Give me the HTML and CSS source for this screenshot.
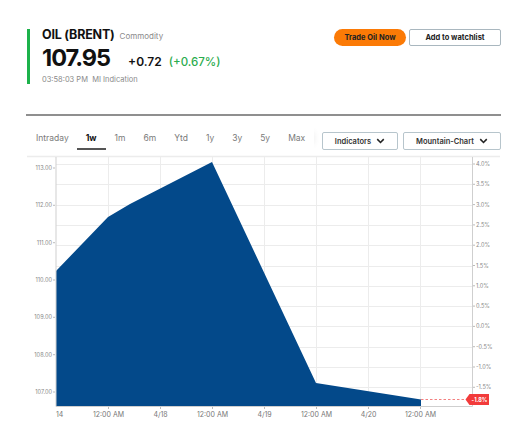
FILE: index.html
```html
<!DOCTYPE html>
<html>
<head>
<meta charset="utf-8">
<link rel="stylesheet" href="styles.css">
</head>
<body>
<div class="page">
  <header class="quote-head">
    <div class="quote-left">
      <div class="title-row"><span class="name">OIL (BRENT)</span><span class="type">Commodity</span></div>
      <div class="price-row"><span class="price">107.95</span><span class="chg">+0.72</span><span class="pct">(+0.67%)</span></div>
      <div class="meta">03:58:03 PM&nbsp;&nbsp;MI Indication</div>
    </div>
    <div class="actions">
      <button class="btn btn-trade">Trade Oil Now</button>
      <button class="btn btn-watch">Add to watchlist</button>
    </div>
  </header>
  <div class="divider"></div>
  <div class="toolbar">
    <nav class="tabs">
      <span class="tab">Intraday</span>
      <span class="tab active">1w</span>
      <span class="tab">1m</span>
      <span class="tab">6m</span>
      <span class="tab">Ytd</span>
      <span class="tab">1y</span>
      <span class="tab">3y</span>
      <span class="tab">5y</span>
      <span class="tab">Max</span>
    </nav>
    <div class="selects">
      <button class="select sel-ind">Indicators <svg class="chev" viewBox="0 0 10 7"><path d="M1.2 1.3 L5 5.2 L8.8 1.3" /></svg></button>
      <button class="select sel-mc">Mountain-Chart <svg class="chev" viewBox="0 0 10 7"><path d="M1.2 1.3 L5 5.2 L8.8 1.3" /></svg></button>
    </div>
  </div>
  <svg class="chart" viewBox="20 150 505 276" width="505" height="276">
    <line x1="27" y1="155.5" x2="500" y2="155.5" stroke="#ececec" stroke-width="1.5"/>
    <g stroke="#ececec" stroke-width="1">
      <line x1="56" y1="163.5" x2="472" y2="163.5"/>
      <line x1="56" y1="183.5" x2="472" y2="183.5"/>
      <line x1="56" y1="204.5" x2="472" y2="204.5"/>
      <line x1="56" y1="224.5" x2="472" y2="224.5"/>
      <line x1="56" y1="244.5" x2="472" y2="244.5"/>
      <line x1="56" y1="265.5" x2="472" y2="265.5"/>
      <line x1="56" y1="285.5" x2="472" y2="285.5"/>
      <line x1="56" y1="305.5" x2="472" y2="305.5"/>
      <line x1="56" y1="325.5" x2="472" y2="325.5"/>
      <line x1="56" y1="346.5" x2="472" y2="346.5"/>
      <line x1="56" y1="366.5" x2="472" y2="366.5"/>
      <line x1="56" y1="386.5" x2="472" y2="386.5"/>
      <line x1="108.5" y1="156" x2="108.5" y2="405"/>
      <line x1="160.5" y1="156" x2="160.5" y2="405"/>
      <line x1="212.5" y1="156" x2="212.5" y2="405"/>
      <line x1="264.5" y1="156" x2="264.5" y2="405"/>
      <line x1="316.5" y1="156" x2="316.5" y2="405"/>
      <line x1="368.5" y1="156" x2="368.5" y2="405"/>
      <line x1="420.5" y1="156" x2="420.5" y2="405"/>
    </g>
    <polygon points="56,270 108,216 130,203 212,161 316,382 421,398.5 421,405 56,405" fill="#03498a"/>
    <g stroke="#cfcfcf" stroke-width="1">
      <line x1="56" y1="156" x2="56" y2="405.5"/>
      <line x1="472.5" y1="156" x2="472.5" y2="405.5"/>
      <line x1="56" y1="405.5" x2="472.5" y2="405.5"/>
    </g>
    <g stroke="#aaa" stroke-width="0.8">
      <line x1="53" y1="167" x2="55" y2="167"/>
      <line x1="53" y1="204.3" x2="55" y2="204.3"/>
      <line x1="53" y1="241.7" x2="55" y2="241.7"/>
      <line x1="53" y1="279" x2="55" y2="279"/>
      <line x1="53" y1="316.3" x2="55" y2="316.3"/>
      <line x1="53" y1="353.7" x2="55" y2="353.7"/>
      <line x1="53" y1="391" x2="55" y2="391"/>
      <line x1="473" y1="163" x2="475" y2="163"/>
      <line x1="473" y1="183.3" x2="475" y2="183.3"/>
      <line x1="473" y1="203.6" x2="475" y2="203.6"/>
      <line x1="473" y1="223.9" x2="475" y2="223.9"/>
      <line x1="473" y1="244.2" x2="475" y2="244.2"/>
      <line x1="473" y1="264.5" x2="475" y2="264.5"/>
      <line x1="473" y1="284.8" x2="475" y2="284.8"/>
      <line x1="473" y1="305.1" x2="475" y2="305.1"/>
      <line x1="473" y1="325.4" x2="475" y2="325.4"/>
      <line x1="473" y1="345.7" x2="475" y2="345.7"/>
      <line x1="473" y1="366" x2="475" y2="366"/>
      <line x1="473" y1="386.3" x2="475" y2="386.3"/>
      <line x1="108.5" y1="406" x2="108.5" y2="408"/>
      <line x1="160.5" y1="406" x2="160.5" y2="408"/>
      <line x1="212.5" y1="406" x2="212.5" y2="408"/>
      <line x1="264.5" y1="406" x2="264.5" y2="408"/>
      <line x1="316.5" y1="406" x2="316.5" y2="408"/>
      <line x1="368.5" y1="406" x2="368.5" y2="408"/>
      <line x1="420.5" y1="406" x2="420.5" y2="408"/>
    </g>
    <g class="ylab" text-anchor="end">
      <text x="52" y="169">113.00</text>
      <text x="52" y="206.3">112.00</text>
      <text x="52" y="243.7">111.00</text>
      <text x="52" y="281">110.00</text>
      <text x="52" y="318.3">109.00</text>
      <text x="52" y="355.7">108.00</text>
      <text x="52" y="393">107.00</text>
    </g>
    <g class="ylab">
      <text x="476" y="165">4.0%</text>
      <text x="476" y="185.3">3.5%</text>
      <text x="476" y="205.6">3.0%</text>
      <text x="476" y="225.9">2.5%</text>
      <text x="476" y="246.2">2.0%</text>
      <text x="476" y="266.5">1.5%</text>
      <text x="476" y="286.8">1.0%</text>
      <text x="476" y="307.1">0.5%</text>
      <text x="476" y="327.4">0.0%</text>
      <text x="476" y="347.7">-0.5%</text>
      <text x="476" y="368">-1.0%</text>
      <text x="476" y="388.3">-1.5%</text>
    </g>
    <line x1="421" y1="398.5" x2="467" y2="398.5" stroke="#f06060" stroke-width="0.8" stroke-dasharray="2.5,2"/>
    <polygon points="465.5,398.5 469.5,393 489,393 489,404 469.5,404" fill="#f23b3b"/>
    <text class="badge" x="479.5" y="400.6" text-anchor="middle">-1.8%</text>
    <g class="xlab" text-anchor="middle">
      <text x="56" y="415.5" text-anchor="start">14</text>
      <text x="108.5" y="415.5">12:00 AM</text>
      <text x="160.5" y="415.5">4/18</text>
      <text x="212.5" y="415.5">12:00 AM</text>
      <text x="264.5" y="415.5">4/19</text>
      <text x="316.5" y="415.5">12:00 AM</text>
      <text x="368.5" y="415.5">4/20</text>
      <text x="420.5" y="415.5">12:00 AM</text>
    </g>
  </svg>
</div>
</body>
</html>
```
FILE: styles.css
```css
* { box-sizing: border-box; }
html, body { margin: 0; padding: 0; background: #fff; }
body { font-family: "Inter", "Lato", "Liberation Sans", sans-serif; color: #111; }
.page { width: 525px; height: 436px; padding: 29px 24px 0 27px; overflow: hidden; }
.quote-head { display: flex; justify-content: space-between; align-items: flex-start; }
.quote-left { border-left: 3px solid #1db24b; padding-left: 12px; height: 55px; }
.title-row { display: flex; align-items: baseline; gap: 5px; height: 12px; margin-top: 0; }
.name { font-size: 12.5px; font-weight: 700; line-height: 12px; color: #111; letter-spacing: -0.2px; }
.type { font-size: 8px; line-height: 12px; color: #8a8a8a; }
.price-row { display: flex; align-items: baseline; margin-top: 6px; height: 22px; }
.price { font-size: 23.5px; font-weight: 700; letter-spacing: -1px; line-height: 22px; color: #111; }
.chg { font-size: 12px; font-weight: 600; margin-left: 18px; color: #111; }
.pct { font-size: 11.5px; font-weight: 500; margin-left: 7px; color: #2bac4e; }
.meta { font-size: 7.5px; color: #8a8a8a; margin-top: 6px; }
.actions { display: flex; gap: 3px; margin-top: 0; }
.btn { font-family: inherit; font-size: 7.5px; font-weight: 700; height: 17px; padding: 0; color: #222; cursor: pointer; }
.btn-trade { width: 72px; background: #fb7a06; border: none; border-radius: 9px; }
.btn-watch { width: 92px; background: #fff; border: 1px solid #a9b7bf; border-radius: 2px; }
.divider { height: 2px; background: #8f8f8f; margin: 30px 0 0 -1px; width: 475px; }
.toolbar { display: flex; justify-content: space-between; align-items: flex-start; margin-top: 10px; height: 25px; }
.tabs { display: flex; height: 24px; box-shadow: 6px 0 6px -6px rgba(0,0,0,0.08); }
.tab { font-size: 8.5px; color: #7a7a7a; padding: 6px 9px 0; height: 24px; line-height: 12px; }
.tab:first-child { padding-right: 8px; }
.tab.active { color: #111; font-weight: 700; border-bottom: 2px solid #555; }
.selects { display: flex; gap: 5px; margin-top: 6px; }
.select { font-family: inherit; font-size: 7.5px; font-weight: 600; color: #333; background: #fff; border: 1px solid #b7c5cc; border-radius: 2px; height: 18px; display: flex; align-items: center; justify-content: center; gap: 5px; padding: 0; }
.sel-ind { width: 76px; }
.sel-mc { width: 98px; }
.chev { width: 9px; height: 6px; fill: none; stroke: #222; stroke-width: 1.8; }
.chart { display: block; margin-left: -7px; margin-top: 0; }
.ylab text, .ylab { font-size: 5.6px; fill: #888; font-family: "Inter", "Liberation Sans", sans-serif; }
.xlab text, .xlab { font-size: 7px; fill: #777; font-family: "Inter", "Liberation Sans", sans-serif; }
.badge { font-size: 5.5px; font-weight: 700; fill: #fff; font-family: "Inter", "Liberation Sans", sans-serif; }
```
